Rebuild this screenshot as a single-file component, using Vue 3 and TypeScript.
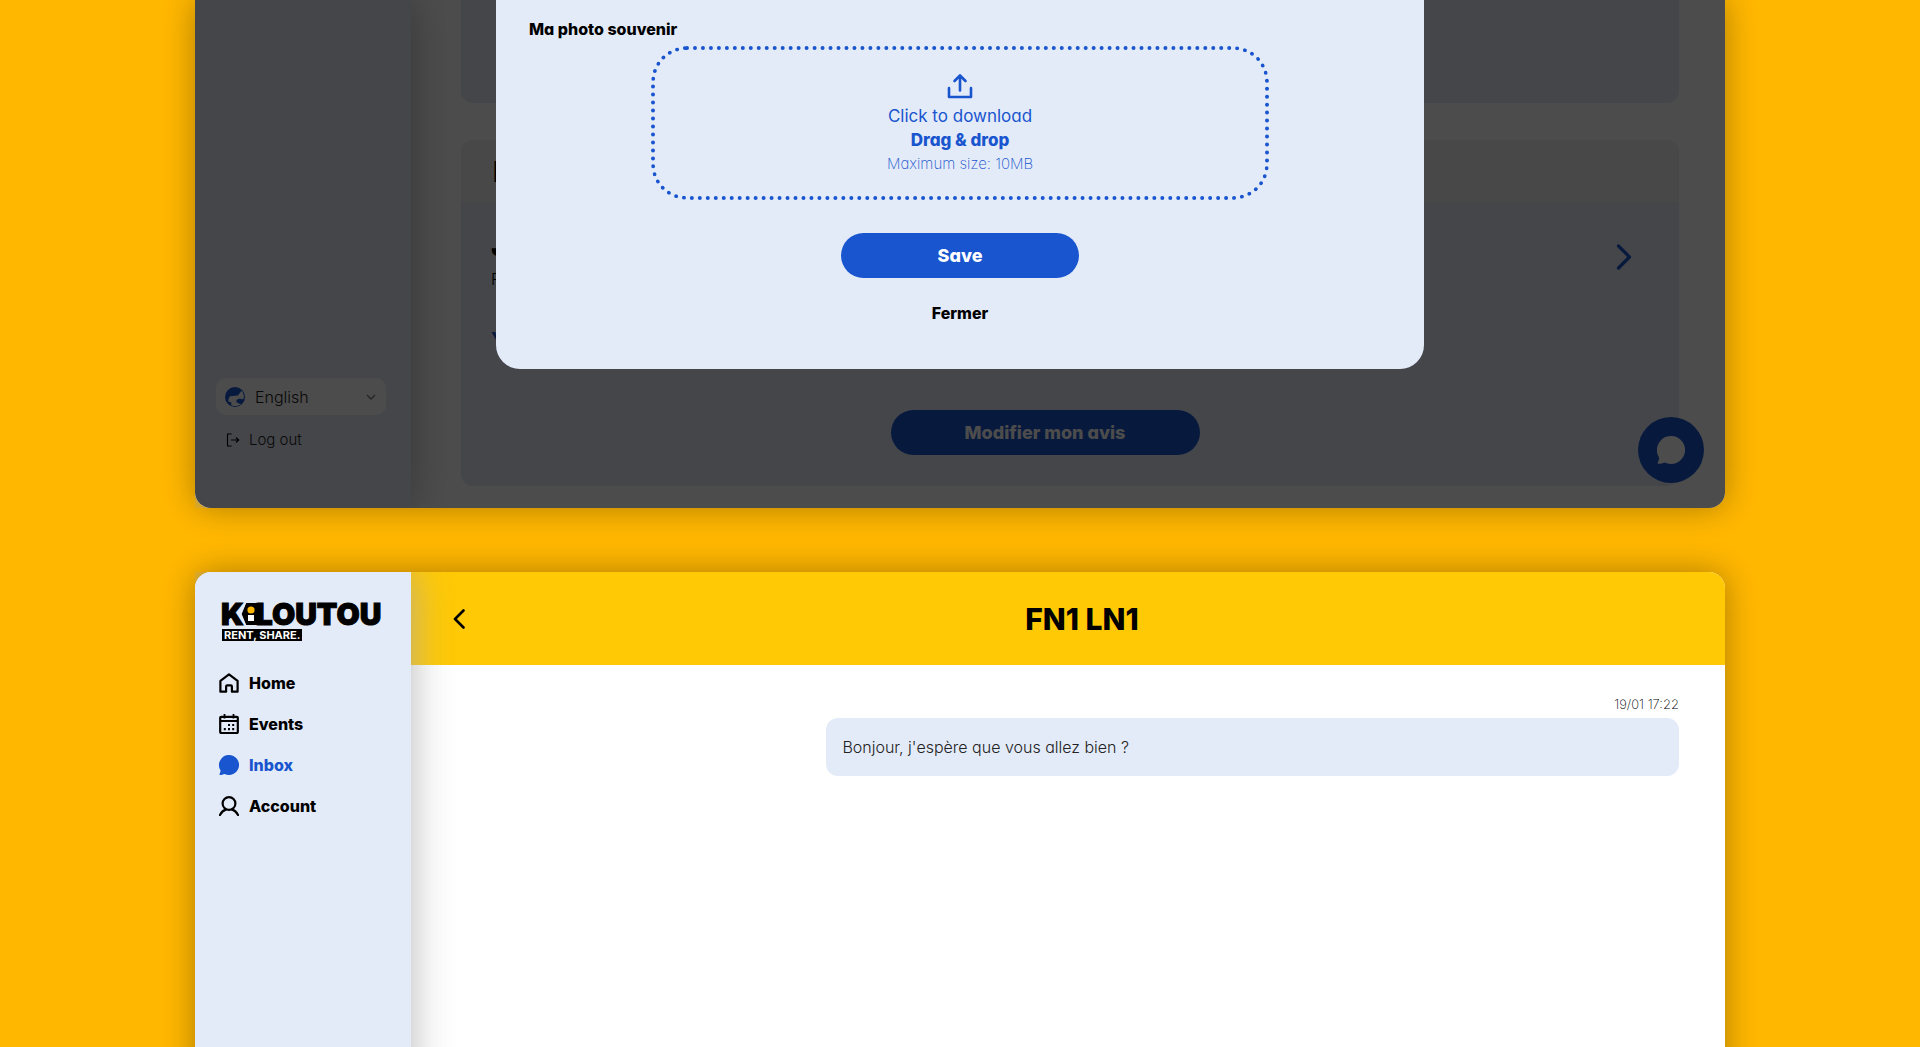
<script setup lang="ts">
import { ref } from 'vue'

interface NavItem {
  id: string
  label: string
}

interface Message {
  id: number
  time: string
  text: string
}

const navItems: NavItem[] = [
  { id: 'home', label: 'Home' },
  { id: 'events', label: 'Events' },
  { id: 'inbox', label: 'Inbox' },
  { id: 'account', label: 'Account' },
]

const messages: Message[] = [
  { id: 1, time: '19/01 17:22', text: "Bonjour, j'espère que vous allez bien ?" },
]

const language = ref('en')
const activeNav = ref('inbox')
</script>

<template>
  <div class="page">
    <section class="panel panel-review">
      <aside class="sidebar">
        <div class="sidebar-footer">
          <div class="language">
            <svg class="globe" viewBox="0 0 20 20" aria-hidden="true">
              <circle cx="10" cy="10" r="10" fill="#1855ce" />
              <path d="M3.200 14.200C3.600 10.400 4.800 8.600 7.600 9L12.400 8.400C14 8.200 14 6.600 15.200 5.600L16.600 3.800C18 5.200 19.200 8 18.800 12C18 11.200 17.400 12.400 16.600 12.200C14.600 11.400 12 12 11.400 13.800C11 15.400 12.400 16.200 14 16.400L16 17C12.600 19.800 8.200 19.400 5.600 17.800C7 17 6.800 16 5.800 15.200C5 14.600 4 15.400 3.200 14.200Z" fill="#fff" />
            </svg>
            <select v-model="language" class="language-select" aria-label="Language">
              <option value="en">English</option>
              <option value="fr">Français</option>
            </select>
            <svg class="caret" viewBox="0 0 10 6" aria-hidden="true">
              <path d="M1 1L5 5L9 1" fill="none" stroke="#777" stroke-width="1.3" />
            </svg>
          </div>
          <button type="button" class="logout">
            <svg class="logout-icon" viewBox="0 0 14 14" aria-hidden="true">
              <path d="M5.500 1H1.500V13H5.500M5 7H12.700M10 4.500L12.700 7L10 9.500" fill="none" stroke="#000" stroke-width="1.100" />
            </svg>
            Log out
          </button>
        </div>
      </aside>

      <main class="review-main">
        <div class="card card-previous"></div>
        <div class="card">
          <header class="card-head">I</header>
          <div class="card-body">
            <div class="card-content">
              <h2 class="card-title">J</h2>
              <p class="card-sub">P</p>
              <p class="card-link">Y</p>
              <button type="button" class="pill pill-wide">Modifier mon avis</button>
            </div>
            <button type="button" class="card-open" aria-label="Open">
              <svg viewBox="0 0 16 28" aria-hidden="true">
                <path d="M2.500 3L13.500 14L2.500 25" fill="none" stroke="#1855ce" stroke-width="3.200" stroke-linecap="round" stroke-linejoin="round" />
              </svg>
            </button>
          </div>
        </div>
      </main>

      <button type="button" class="chat" aria-label="Chat">
        <svg viewBox="0 0 20 20" aria-hidden="true">
          <path d="M10 0A10 10 0 1 1 5.500 18.900C4.200 19.400 2.500 19.900 1.200 19.900C0.500 19.900 0.200 19.400 0.600 18.800C1.300 17.700 1.600 16.500 1.500 15.300A10 10 0 0 1 10 0Z" fill="#fff" />
        </svg>
      </button>

      <div class="overlay">
        <form class="modal" @submit.prevent>
          <label class="modal-label" for="photo">Ma photo souvenir</label>
          <label class="dropzone" for="photo">
            <svg class="upload" viewBox="0 0 26 26" aria-hidden="true">
              <path d="M2 15V24H24V15M13 17.500V3M7.500 8L13 2.500L18.500 8" fill="none" stroke="#1855ce" stroke-width="2.600" stroke-linecap="round" stroke-linejoin="round" />
            </svg>
            <span class="drop-click">Click to download</span>
            <span class="drop-drag">Drag &amp; drop</span>
            <span class="drop-size">Maximum size: 10MB</span>
          </label>
          <input id="photo" class="file" type="file" />
          <button type="submit" class="pill">Save</button>
          <button type="button" class="close">Fermer</button>
        </form>
      </div>
    </section>

    <section class="panel panel-inbox">
      <aside class="sidebar sidebar-nav">
        <a class="logo" href="#" aria-label="Kiloutou">
          <span class="wordmark">
            <span>K</span>
            <svg class="logo-i" viewBox="0 0 18 22" aria-hidden="true">
              <path d="M6 0H18V22H6L1 11Z" fill="#000" />
              <path d="M5.500 0L1 11L5.500 22" fill="none" stroke="#e4ebf8" stroke-width="1.200" />
              <circle cx="11" cy="7" r="3.600" fill="#ffb700" />
              <rect x="8" y="12" width="6" height="6" fill="#fff" />
            </svg>
            <span>LOUTOU</span>
          </span>
          <span class="tagline">RENT, SHARE.</span>
        </a>
        <nav class="nav">
          <a
            v-for="item in navItems"
            :key="item.id"
            href="#"
            class="nav-link"
            :class="{ active: item.id === activeNav }"
            @click.prevent="activeNav = item.id"
          >
            <svg v-if="item.id === 'home'" class="nav-icon" viewBox="0 0 20 20" aria-hidden="true">
              <path d="M1.400 7.800L10 1.300L18.600 7.800V18.700H12.900V13.400Q12.900 12.300 11.800 12.300H8.200Q7.100 12.300 7.100 13.400V18.700H1.400Z" fill="none" stroke="currentColor" stroke-width="2.200" stroke-linejoin="round" />
            </svg>
            <svg v-else-if="item.id === 'events'" class="nav-icon" viewBox="0 0 20 20" aria-hidden="true">
              <rect x="1.200" y="2.800" width="17.600" height="16.200" rx="1" fill="none" stroke="currentColor" stroke-width="2.200" />
              <path d="M1 7H19M5.500 0V4.500M14.500 0V4.500" stroke="currentColor" stroke-width="1.800" />
              <path d="M9 11H11M13.200 11H15.200M4.800 15.200H6.800M9 15.200H11M13.200 15.200H15.200" stroke="currentColor" stroke-width="2.200" />
            </svg>
            <svg v-else-if="item.id === 'inbox'" class="nav-icon" viewBox="0 0 20 20" aria-hidden="true">
              <path d="M10 0A10 10 0 1 1 5.500 18.900C4.200 19.400 2.500 19.900 1.200 19.900C0.500 19.900 0.200 19.400 0.600 18.800C1.300 17.700 1.600 16.500 1.500 15.300A10 10 0 0 1 10 0Z" fill="currentColor" />
            </svg>
            <svg v-else class="nav-icon" viewBox="0 0 20 20" aria-hidden="true">
              <circle cx="10" cy="7.500" r="6.400" fill="none" stroke="currentColor" stroke-width="2.200" />
              <path d="M0.900 19.100C2.300 16.300 4.400 14.300 7 13.400M19.100 19.100C17.700 16.300 15.600 14.300 13 13.400" fill="none" stroke="currentColor" stroke-width="2.200" stroke-linecap="round" />
            </svg>
            {{ item.label }}
          </a>
        </nav>
      </aside>

      <main class="thread">
        <header class="thread-head">
          <button type="button" class="back" aria-label="Back">
            <svg viewBox="0 0 12 20" aria-hidden="true">
              <path d="M10.500 1.500L2 10L10.500 18.500" fill="none" stroke="#000" stroke-width="2.600" stroke-linecap="round" stroke-linejoin="round" />
            </svg>
          </button>
          <h1 class="thread-title">FN1 LN1</h1>
        </header>
        <div class="messages">
          <article v-for="message in messages" :key="message.id" class="message">
            <time class="message-time">{{ message.time }}</time>
            <p class="bubble">{{ message.text }}</p>
          </article>
        </div>
      </main>
    </section>
  </div>
</template>

<style>
body {
  margin: 0;
  background: #ffb700;
}
</style>

<style scoped>
.page {
  box-sizing: border-box;
  min-height: 100vh;
  padding: 0 195px;
  display: flex;
  flex-direction: column;
  gap: 64px;
  overflow: hidden;
  background: #ffb700;
  color: #000;
  font-family: Inter, "Open Sans", sans-serif;
  font-feature-settings: "cv11";
  font-size: 16px;
  line-height: 24px;
}

.page * {
  box-sizing: border-box;
}

button,
select {
  border: 0;
  padding: 0;
  background: none;
  color: inherit;
  font: inherit;
  font-feature-settings: inherit;
  cursor: pointer;
}

h1,
h2,
p {
  margin: 0;
}

svg {
  display: block;
  flex: none;
}

.panel {
  position: relative;
  display: flex;
  background: #fff;
  box-shadow: 0 0 32px rgba(0, 0, 0, 0.32);
}

.panel-review {
  border-radius: 0 0 16px 16px;
}

/* The conversation panel runs on past the bottom of the window. */
.panel-inbox {
  flex: 1;
  margin-bottom: -80px;
  border-radius: 16px 16px 0 0;
}

.sidebar {
  position: relative;
  z-index: 1;
  flex: none;
  width: 216px;
  display: flex;
  flex-direction: column;
  background: #e4ebf8;
  box-shadow: 0 0 40px rgba(168, 168, 168, 0.84);
  clip-path: inset(0 -60px 0 0);
}

.panel-review .sidebar {
  justify-content: flex-end;
  border-radius: 0 0 0 16px;
}

.sidebar-nav {
  border-radius: 16px 0 0 0;
}

.sidebar-footer {
  padding: 0 25px 56px 21px;
  display: flex;
  flex-direction: column;
  gap: 13px;
}

.language {
  height: 37px;
  padding: 0 10px 0 9px;
  display: flex;
  align-items: center;
  gap: 10px;
  border-radius: 10px;
  background: #fff;
  color: #222;
  font-weight: 300;
}

.globe {
  width: 20px;
  height: 20px;
}

.language-select {
  flex: 1;
  min-width: 0;
  appearance: none;
}

.caret {
  width: 10px;
  height: 6px;
}

.logout {
  padding-left: 10px;
  display: flex;
  align-items: center;
  gap: 9px;
  color: #222;
  font-size: 15px;
  font-weight: 300;
}

.logout-icon {
  width: 14px;
  height: 14px;
}

.review-main {
  flex: 1;
  min-width: 0;
  padding: 0 46px 22px 50px;
  display: flex;
  flex-direction: column;
  gap: 37px;
}

.card {
  border-radius: 12px;
  overflow: hidden;
  background: #e4ebf8;
}

.card-previous {
  height: 103px;
  border-radius: 0 0 12px 12px;
}

.card-head {
  padding: 16px 31px 14px;
  background: #f2f2f2;
  font-size: 28px;
  line-height: 32px;
}

.card-body {
  display: flex;
  align-items: flex-start;
}

.card-content {
  flex: 1;
  padding: 28px 0 31px 30px;
}

.card-title {
  font-size: 28px;
  line-height: 32px;
  font-weight: 800;
}

.card-sub {
  padding-top: 5px;
  font-weight: 300;
}

.card-link {
  padding: 35px 0 56px;
  color: #1855ce;
  font-size: 20px;
  line-height: 28px;
  font-weight: 700;
}

.card-open {
  width: 80px;
  height: 110px;
  padding-right: 30px;
  display: grid;
  place-items: center;
}

.card-open svg {
  width: 16px;
  height: 28px;
}

.pill {
  display: block;
  margin: 0 auto;
  width: 238px;
  height: 45px;
  border-radius: 24px;
  background: #1855ce;
  color: #fff;
  font-size: 18px;
  font-weight: 800;
}

.pill-wide {
  width: 309px;
}

.chat {
  position: absolute;
  right: 21px;
  bottom: 25px;
  width: 66px;
  height: 66px;
  display: grid;
  place-items: center;
  border-radius: 50%;
  background: #1855ce;
}

.chat svg {
  width: 28px;
  height: 28px;
}

.overlay {
  position: absolute;
  inset: 0;
  z-index: 2;
  display: flex;
  justify-content: center;
  align-items: flex-start;
  border-radius: 0 0 16px 16px;
  background: rgba(0, 0, 0, 0.7);
}

.modal {
  width: 928px;
  max-width: 90%;
  padding: 17px 33px 44px;
  display: flex;
  flex-direction: column;
  border-radius: 0 0 24px 24px;
  background: #e4ebf8;
}

.modal-label {
  align-self: flex-start;
  font-weight: 800;
}

.dropzone {
  align-self: center;
  width: 618px;
  max-width: 100%;
  margin: 5px 0 33px;
  padding: 23px 0 20px;
  display: flex;
  flex-direction: column;
  align-items: center;
  border: 4px dotted #1855ce;
  border-radius: 36px;
  color: #1855ce;
  cursor: pointer;
}

.upload {
  width: 26px;
  height: 26px;
  margin-bottom: 5px;
}

.drop-click {
  font-size: 17px;
}

.drop-drag {
  font-size: 17px;
  font-weight: 800;
}

.drop-size {
  font-size: 15px;
  font-weight: 200;
}

.file {
  display: none;
}

.close {
  align-self: center;
  margin-top: 23px;
  font-weight: 800;
}

.logo {
  margin: 31px 0 0 26px;
  display: flex;
  flex-direction: column;
  align-items: flex-start;
  gap: 4px;
  color: #000;
  text-decoration: none;
}

.wordmark {
  height: 22px;
  display: flex;
  align-items: center;
  font-size: 30px;
  line-height: 22px;
  font-weight: 900;
  -webkit-text-stroke: 1px #000;
}

.logo-i {
  width: 18px;
  height: 22px;
  margin: 0 -2px 0 -4px;
}

.tagline {
  margin-left: 1px;
  padding: 0 2px;
  background: #000;
  color: #fff;
  font-size: 11px;
  line-height: 12px;
  font-weight: 700;
}

.nav {
  margin: 30px 0 0 24px;
  display: flex;
  flex-direction: column;
  gap: 17px;
}

.nav-link {
  display: flex;
  align-items: center;
  gap: 10px;
  color: #000;
  font-weight: 800;
  text-decoration: none;
}

.nav-link.active {
  color: #1855ce;
}

.nav-icon {
  width: 20px;
  height: 20px;
}

.thread {
  flex: 1;
  min-width: 0;
}

.thread-head {
  height: 93px;
  padding: 0 46px 0 22px;
  display: flex;
  align-items: center;
  border-radius: 0 16px 0 0;
  background: #ffc905;
}

.back {
  position: relative;
  z-index: 2;
  width: 52px;
  height: 52px;
  display: grid;
  place-items: center;
}

.back svg {
  width: 12px;
  height: 20px;
}

.thread-title {
  flex: 1;
  font-size: 30px;
  line-height: 36px;
  font-weight: 800;
  text-align: center;
}

.messages {
  padding: 30px 46px 30px 50px;
}

.message {
  width: 70%;
  margin-left: auto;
  display: flex;
  flex-direction: column;
  gap: 4px;
}

.message-time {
  align-self: flex-end;
  font-size: 13px;
  line-height: 19px;
  font-weight: 200;
}

.bubble {
  padding: 17px 16px;
  border-radius: 12px;
  background: #e4ebf8;
  color: #222;
  font-weight: 300;
}
</style>
